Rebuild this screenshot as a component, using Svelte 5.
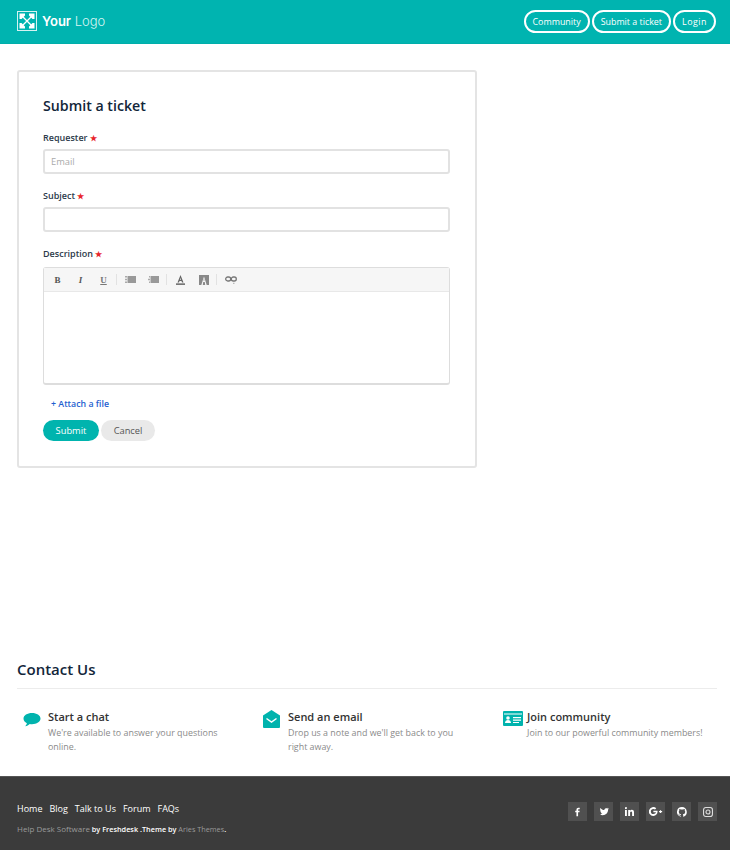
<script>
  const nav = ['Community', 'Submit a ticket', 'Login'];
  const tools = ['b', 'i', 'u', '|', 'ul', 'ol', '|', 'color', 'bg', '|', 'link'];
  const links = ['Home', 'Blog', 'Talk to Us', 'Forum', 'FAQs'];
</script>

<div class="page">
  <header class="header">
    <div class="logo">
      <svg width="20" height="20" viewBox="0 0 20 20" aria-hidden="true">
        <rect x="0.5" y="0.5" width="19" height="19" fill="none" stroke="#d5f3f2" stroke-width="1"/>
        <path d="M2.500 2.500h5.500v2l-3.500 3.500h-2zM17.500 2.500h-5.500v2l3.500 3.500h2zM2.500 17.500h5.500v-2l-3.500-3.500h-2zM17.500 17.500h-5.500v-2l3.500-3.500h2z" fill="#fff"/>
        <path d="M6 6l8 8M14 6l-8 8" stroke="#fff" stroke-width="1.300"/>
      </svg>
      <span class="logo-text"><b>Your</b> Logo</span>
    </div>
    <nav class="nav">
      {#each nav as item}
        <span class="pill">{item}</span>
      {/each}
    </nav>
  </header>

  <main class="main">
    <section class="card">
      <h1 class="title">Submit a ticket</h1>

      <div class="label">Requester <span class="star">★</span></div>
      <div class="input placeholder">Email</div>

      <div class="label">Subject <span class="star">★</span></div>
      <div class="input"></div>

      <div class="label">Description <span class="star">★</span></div>
      <div class="editor">
        <div class="toolbar">
          {#each tools as t}
            {#if t === '|'}
              <span class="sep"></span>
            {:else}
              <span class="tool">
                {#if t === 'b'}
                  <span class="glyph bold">B</span>
                {:else if t === 'i'}
                  <span class="glyph italic">I</span>
                {:else if t === 'u'}
                  <span class="glyph under">U</span>
                {:else if t === 'ul'}
                  <svg width="11" height="7" viewBox="0 0 11 7"><path d="M0 0h2v1.500H0zM0 2.750h2v1.500H0zM0 5.500h2V7H0z" fill="#aaa"/><rect x="2.500" width="8.500" height="7" fill="#999"/></svg>
                {:else if t === 'ol'}
                  <svg width="11" height="7" viewBox="0 0 11 7"><path d="M1 0h1v1.500H1zM0 2.750h2v1.500H0zM1 5.500h1V7H1z" fill="#aaa"/><rect x="2.500" width="8.500" height="7" fill="#999"/></svg>
                {:else if t === 'color'}
                  <svg width="9" height="10" viewBox="0 0 9 10"><path d="M4.500 0L7.500 7.500H6L5.500 6h-2L3 7.500H1.500zM3.900 4.700h1.200L4.500 3z" fill="#666"/><rect y="8.300" width="9" height="1.700" fill="#777"/></svg>
                {:else if t === 'bg'}
                  <svg width="10" height="10" viewBox="0 0 10 10"><path fill-rule="evenodd" d="M0 0h10v10H0zM5 1.500L2.300 10h1.500L4.200 7h1.600l.4 3h1.500zM4.400 5.600L5 3.800l.6 1.800z" fill="#888"/></svg>
                {:else}
                  <svg width="12" height="8" viewBox="0 0 12 8"><g fill="none" stroke="#777" stroke-width="1.300"><rect x="0.700" y="1" width="5" height="4" rx="2"/><rect x="6.300" y="1" width="5" height="4" rx="2"/></g><rect x="8" y="6.800" width="1.500" height="1" fill="#aaa"/></svg>
                {/if}
              </span>
            {/if}
          {/each}
        </div>
        <div class="editor-body"></div>
      </div>

      <div class="attach">+ Attach a file</div>
      <div class="actions">
        <span class="btn primary">Submit</span>
        <span class="btn cancel">Cancel</span>
      </div>
    </section>
  </main>

  <section class="contact">
    <h2 class="contact-title">Contact Us</h2>
    <div class="columns">
      <div class="col">
        <svg class="col-icon" width="18" height="16" viewBox="0 0 18 16"><path d="M9 1c4.700 0 8.500 2.400 8.500 5.600S13.700 12.200 9 12.200c-.8 0-1.500-.1-2.200-.2-1.300 1.300-2.800 2-4.600 2.200.9-.9 1.500-1.800 1.700-3C1.700 10.200.5 8.500.500 6.600.5 3.400 4.300 1 9 1z" fill="#00b3ad"/></svg>
        <div>
          <h3 class="col-title">Start a chat</h3>
          <p class="col-text">We're available to answer your questions online.</p>
        </div>
      </div>
      <div class="col wide-gap">
        <svg class="col-icon mail" width="17" height="18" viewBox="0 0 17 18"><path d="M8.500 0L17 5.500V17a1 1 0 0 1-1 1H1a1 1 0 0 1-1-1V5.500z" fill="#00b3ad"/><path d="M3.500 8.500L8.500 12l5-3.500" fill="none" stroke="#fff" stroke-width="1.500"/></svg>
        <div>
          <h3 class="col-title">Send an email</h3>
          <p class="col-text">Drop us a note and we'll get back to you right away.</p>
        </div>
      </div>
      <div class="col">
        <svg class="col-icon card-icon" width="20" height="15" viewBox="0 0 20 15"><rect width="20" height="15" rx="1" fill="#00b3ad"/><rect x="1" y="2.500" width="18" height="1" fill="#fff"/><circle cx="5" cy="7" r="1.800" fill="#fff"/><path d="M2 12c0-2 1.300-3 3-3s3 1 3 3z" fill="#fff"/><path d="M10 6h8v1.200h-8zM10 8.500h8v1.200h-8zM10 11h6v1h-6z" fill="#fff"/></svg>
        <div>
          <h3 class="col-title">Join community</h3>
          <p class="col-text">Join to our powerful community members!</p>
        </div>
      </div>
    </div>
  </section>

  <footer class="footer">
    <div>
      <div class="links">
        {#each links as l}<span>{l}</span>{/each}
      </div>
      <div class="credit"><span class="dim help">Help Desk Software</span> by Freshdesk .Theme by <span class="dim aries">Aries Themes</span>.</div>
    </div>
    <div class="social">
      <span class="soc"><svg width="5" height="10" viewBox="0 0 7 12"><path d="M2 12V6.500H.3V4.400H2V3c0-2 1.100-3 2.800-3H6.600v2.100H5.400c-.9 0-1.100.4-1.100 1.100v1.200h2.200l-.3 2.100H4.300V12z" fill="#fff"/></svg></span>
      <span class="soc"><svg width="10" height="9" viewBox="0 0 14 11"><path d="M13 1.300c-.5.200-1 .4-1.500.4.500-.3 1-.8 1.200-1.400-.5.300-1.100.5-1.700.7A2.700 2.700 0 0 0 7.400 3.400C5.200 3.300 3.200 2.200 1.900.5c-.7 1.200-.4 2.800.8 3.600-.4 0-.8-.1-1.200-.3 0 1.300.9 2.400 2.100 2.700-.4.100-.8.100-1.200 0 .3 1.100 1.300 1.800 2.500 1.900A5.300 5.300 0 0 1 1 9.500C2.300 10.300 3.700 10.800 5.100 10.800c5 0 7.800-4.200 7.600-8 .5-.4 1-.9 1.300-1.500z" fill="#fff"/></svg></span>
      <span class="soc"><svg width="9" height="9" viewBox="0 0 11 11"><path d="M0 3.600h2.300V11H0zM1.150 0a1.300 1.300 0 1 1 0 2.600 1.300 1.300 0 0 1 0-2.600zM3.900 3.600h2.200v1c.4-.7 1.200-1.200 2.300-1.200 2.100 0 2.600 1.400 2.600 3.300V11H8.700V7.200c0-.9-.1-1.800-1.200-1.800s-1.300.9-1.300 1.800V11H3.900z" fill="#fff"/></svg></span>
      <span class="soc"><svg width="14" height="9" viewBox="0 0 16 10"><path d="M5 4.100v1.800h2.900C7.700 7 6.600 7.900 5 7.900a2.900 2.900 0 1 1 0-5.800c.8 0 1.400.3 1.900.7l1.400-1.400A5 5 0 1 0 5 10c2.900 0 4.800-2 4.800-4.900 0-.3 0-.7-.1-1z" fill="#fff"/><path d="M12.500 3.500h1.300v1h1.200v1.300h-1.200v1h-1.300v-1h-1.100V4.500h1.100z" fill="#fff"/></svg></span>
      <span class="soc"><svg width="10" height="10" viewBox="0 0 16 16"><path d="M8 0a8 8 0 0 0-2.500 15.600c.4.100.5-.2.500-.4v-1.400c-2.200.5-2.700-1-2.700-1-.4-.9-.9-1.200-.9-1.200-.7-.5.100-.5.100-.5.800.1 1.200.8 1.200.8.700 1.200 1.900.9 2.300.7.100-.5.300-.9.500-1.100-1.800-.2-3.600-.9-3.600-4 0-.9.300-1.600.8-2.100-.1-.2-.4-1 .1-2.100 0 0 .7-.2 2.200.8a7.600 7.600 0 0 1 4 0c1.500-1 2.200-.8 2.200-.8.400 1.100.2 1.900.1 2.100.5.600.8 1.300.8 2.100 0 3.100-1.900 3.700-3.700 3.900.3.300.5.800.5 1.500v2.200c0 .2.100.5.500.4A8 8 0 0 0 8 0z" fill="#fff"/></svg></span>
      <span class="soc"><svg width="10" height="10" viewBox="0 0 11 11"><rect x="0.600" y="0.600" width="9.800" height="9.800" rx="2.500" fill="none" stroke="#ddd" stroke-width="1.200"/><circle cx="5.500" cy="5.500" r="2.200" fill="none" stroke="#ddd" stroke-width="1.200"/></svg></span>
    </div>
  </footer>
</div>

<style>
  :global(body) {
    margin: 0;
    background: #fff;
    font-family: "Open Sans", "Liberation Sans", sans-serif;
  }
  .page {
    width: 730px;
    height: 850px;
    display: flex;
    flex-direction: column;
    overflow: hidden;
  }
  .header {
    height: 44px;
    box-sizing: border-box;
    background: #00b4b0;
    border-bottom: 1px solid #00aeaa;
    display: flex;
    align-items: center;
    justify-content: space-between;
    padding: 0 14px 1px 17px;
  }
  .logo {
    display: flex;
    align-items: center;
    gap: 5px;
    color: #fff;
  }
  .logo-text {
    font-family: Inter, Lato, sans-serif;
    font-size: 13px;
    font-weight: 300;
    color: #d9f4f3;
  }
  .logo-text b {
    font-weight: 600;
    color: #fff;
  }
  .nav {
    display: flex;
    gap: 2px;
  }
  .pill {
    box-sizing: border-box;
    height: 23px;
    line-height: 19px;
    padding: 0 7px;
    border: 2px solid #fff;
    border-radius: 12px;
    color: #fff;
    font-size: 8.900px;
    font-weight: 400;
  }
  .pill:last-child {
    letter-spacing: 0.5px;
  }
  .main {
    padding: 26px 17px 0;
    flex: none;
  }
  .card {
    width: 460px;
    height: 398px;
    box-sizing: border-box;
    border: 2px solid #e4e4e4;
    border-radius: 3px;
    padding: 24px 25px 0 24px;
  }
  .title {
    margin: 0 0 14px;
    font-size: 14.200px;
    line-height: 20px;
    font-weight: 600;
    color: #12263a;
  }
  .label {
    font-size: 9px;
    font-weight: 600;
    line-height: 15px;
    color: #2b3a4a;
    margin-bottom: 4px;
  }
  .star {
    color: #e8262c;
    font-size: 8px;
    line-height: 1;
  }
  .input {
    height: 25px;
    box-sizing: border-box;
    border: 2px solid #e2e2e2;
    border-radius: 3px;
    padding-left: 6px;
    line-height: 21px;
    font-size: 9.300px;
    margin-bottom: 14px;
  }
  .placeholder {
    color: #aaa;
  }
  .editor {
    border: 1px solid #ddd;
    border-bottom-width: 2px;
    border-radius: 3px;
    height: 118px;
    box-sizing: border-box;
    margin-top: 6px;
  }
  .toolbar {
    height: 24px;
    box-sizing: border-box;
    background: #f6f6f6;
    border-bottom: 1px solid #e8e8e8;
    display: flex;
    align-items: center;
    padding-left: 2px;
  }
  .tool {
    width: 23px;
    display: flex;
    align-items: center;
    justify-content: center;
  }
  .sep {
    width: 1px;
    height: 11px;
    background: #e2e2e2;
    margin: 0 2px 0 1px;
  }
  .glyph {
    font-family: "Liberation Serif", serif;
    font-size: 9px;
    color: #555;
    font-weight: 700;
  }
  .italic {
    font-style: italic;
  }
  .under {
    text-decoration: underline;
    color: #777;
  }
  .attach {
    margin: 12px 0 0 8px;
    font-size: 8.800px;
    line-height: 14px;
    font-weight: 600;
    color: #1f5fd0;
  }
  .actions {
    display: flex;
    gap: 2px;
    margin-top: 9px;
  }
  .btn {
    height: 21px;
    line-height: 21px;
    border-radius: 11px;
    font-size: 9.300px;
    text-align: center;
  }
  .primary {
    width: 56px;
    background: #00b4ae;
    color: #fff;
  }
  .cancel {
    width: 54px;
    background: #e9e9e9;
    color: #555;
  }
  .contact {
    margin: 190px 13px 0 17px;
    flex: none;
  }
  .contact-title {
    margin: 0;
    font-size: 15px;
    line-height: 22px;
    font-weight: 600;
    color: #12263a;
    padding-bottom: 8px;
    border-bottom: 1px solid #ececec;
  }
  .columns {
    display: grid;
    grid-template-columns: repeat(3, 240px);
    padding: 20px 0 0 6px;
  }
  .col {
    display: flex;
    align-items: flex-start;
    gap: 7px;
  }
  .wide-gap {
    gap: 8px;
  }
  .col-icon {
    flex: none;
    margin-top: 3px;
  }
  .mail {
    margin-top: 1px;
  }
  .card-icon {
    margin-top: 2px;
    margin-right: -3px;
  }
  .col-title {
    margin: 0 0 1px;
    font-size: 11px;
    font-weight: 600;
    line-height: 16px;
    color: #333;
  }
  .col-text {
    margin: 0;
    max-width: 180px;
    font-size: 8.900px;
    line-height: 14px;
    color: #8a8a8a;
  }
  .footer {
    margin-top: auto;
    height: 74px;
    box-sizing: border-box;
    background: #3b3b3b;
    border-top: 1px solid #555;
    display: flex;
    justify-content: space-between;
    padding: 25px 13px 0 17px;
  }
  .links {
    display: flex;
    gap: 7px;
    color: #fff;
    font-size: 9px;
    line-height: 14px;
  }
  .credit {
    margin-top: 7px;
    font-size: 7.300px;
    font-weight: 600;
    line-height: 11px;
    color: #fff;
  }
  .dim {
    color: #9a9a9a;
    font-weight: 400;
  }
  .help {
    font-size: 8px;
  }
  .aries {
    font-size: 7.300px;
  }
  .social {
    display: flex;
    gap: 7px;
  }
  .soc {
    width: 19px;
    height: 19px;
    background: #505050;
    display: flex;
    align-items: center;
    justify-content: center;
  }
</style>
